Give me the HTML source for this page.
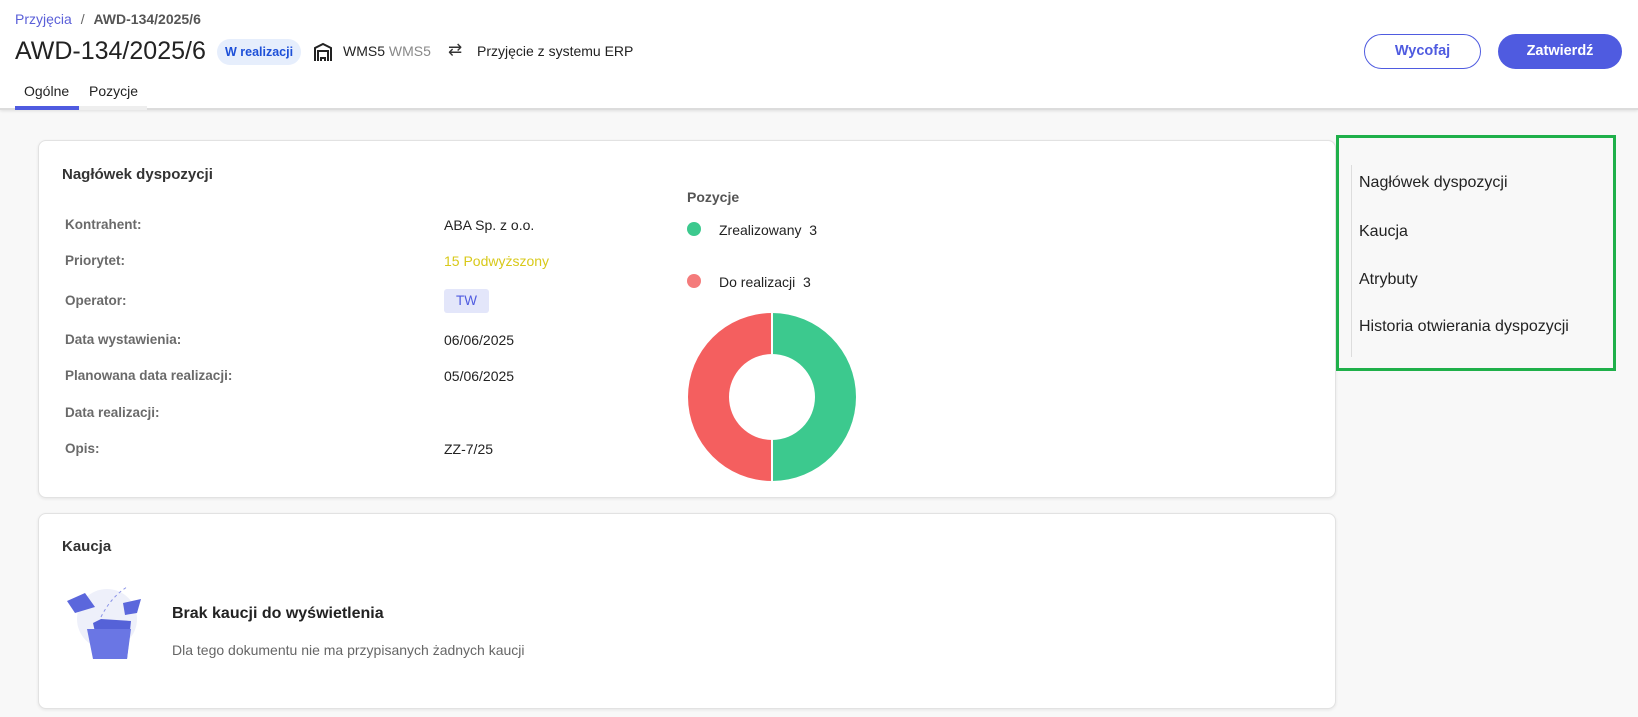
<!DOCTYPE html>
<html><head><meta charset="utf-8"><style>
*{box-sizing:border-box;margin:0;padding:0}
body{width:1638px;height:717px;overflow:hidden;background:#f8f8f8;font-family:"Liberation Sans",sans-serif;color:#222;position:relative;font-size:14.5px}
.a{position:absolute;white-space:nowrap}
.hdr{position:absolute;left:0;top:0;width:1638px;height:110px;background:#fff;border-bottom:2px solid #dcdcdc;box-shadow:0 1px 3px rgba(0,0,0,.1)}
.card{position:absolute;background:#fff;border:1px solid #e2e2e2;border-radius:8px;box-shadow:0 1px 3px rgba(0,0,0,.08)}
.lbl{color:#6a6a6a;font-size:13.5px;font-weight:bold}
.val{font-size:14px;color:#222}
.btn{position:absolute;border-radius:18px;font-weight:bold;font-size:14.5px;text-align:center;line-height:35px}
</style></head><body>
<div class="hdr"></div>
<div class="a" style="left:15px;top:11px;font-size:14px;color:#5a5fd8">Przyjęcia <span style="color:#666;margin:0 5px">/</span> <b style="color:#555">AWD-134/2025/6</b></div>
<div class="a" style="left:15px;top:37px;font-size:25px;color:#222">AWD-134/2025/6</div>
<div class="a" style="left:217px;top:39px;height:26px;padding:0 8px;line-height:26px;border-radius:13px;background:#e6eefc;color:#1e50d8;font-weight:bold;font-size:12.5px">W realizacji</div>
<svg class="a" style="left:313px;top:42px" width="20" height="20" viewBox="0 0 20 20" fill="none" stroke="#222" stroke-width="2"><path d="M2 19V6l8-4 8 4v13M5 19V9h10v10M8 19v-3h4v3"/></svg>
<div class="a" style="left:343px;top:43px;font-size:14px">WMS5 <span style="color:#888">WMS5</span></div>
<div class="a" style="left:448px;top:40px;font-size:17px;color:#333">⇄</div>
<div class="a" style="left:477px;top:43px;font-size:14px">Przyjęcie z systemu ERP</div>
<div class="a" style="left:24px;top:83px;font-size:14px">Ogólne</div>
<div class="a" style="left:89px;top:83px;font-size:14px">Pozycje</div>
<div class="a" style="left:15px;top:106px;width:64px;height:4px;background:#4f5be0"></div>
<div class="a" style="left:79px;top:106px;width:68px;height:4px;background:#eee"></div>
<div class="btn" style="left:1364px;top:34px;width:117px;height:35px;border:1.5px solid #4f5be0;color:#4f5be0;background:#fff;line-height:32px">Wycofaj</div>
<div class="btn" style="left:1498px;top:34px;width:124px;height:35px;background:#4f5be0;color:#fff">Zatwierdź</div>

<div class="card" style="left:38px;top:140px;width:1298px;height:358px"></div>
<div class="a" style="left:62px;top:166px;font-weight:bold;font-size:15px;color:#333">Nagłówek dyspozycji</div>
<div class="a lbl" style="left:65px;top:217px">Kontrahent:</div><div class="a val" style="left:444px;top:217px">ABA Sp. z o.o.</div>
<div class="a lbl" style="left:65px;top:253px">Priorytet:</div><div class="a val" style="left:444px;top:253px;color:#d8c91a">15 Podwyższony</div>
<div class="a lbl" style="left:65px;top:293px">Operator:</div><div class="a" style="left:444px;top:289px;width:45px;height:24px;background:#e3e6fa;color:#4f5be0;border-radius:3px;text-align:center;line-height:24px;font-size:13.5px">TW</div>
<div class="a lbl" style="left:65px;top:332px">Data wystawienia:</div><div class="a val" style="left:444px;top:332px">06/06/2025</div>
<div class="a lbl" style="left:65px;top:368px">Planowana data realizacji:</div><div class="a val" style="left:444px;top:368px">05/06/2025</div>
<div class="a lbl" style="left:65px;top:405px">Data realizacji:</div>
<div class="a lbl" style="left:65px;top:441px">Opis:</div><div class="a val" style="left:444px;top:441px">ZZ-7/25</div>
<div class="a" style="left:687px;top:189px;font-size:14px;color:#555;font-weight:bold">Pozycje</div>
<div class="a" style="left:687px;top:222px;width:14px;height:14px;border-radius:50%;background:#3cc98e"></div>
<div class="a val" style="left:719px;top:222px">Zrealizowany&nbsp; 3</div>
<div class="a" style="left:687px;top:274px;width:14px;height:14px;border-radius:50%;background:#f47b7b"></div>
<div class="a val" style="left:719px;top:274px">Do realizacji&nbsp; 3</div>
<svg class="a" style="left:688px;top:313px" width="168" height="168" viewBox="0 0 168 168">
<path d="M84 0A84 84 0 0 1 84 168L84 127A43 43 0 0 0 84 41Z" fill="#3cc98e"/>
<path d="M84 0A84 84 0 0 0 84 168L84 127A43 43 0 0 1 84 41Z" fill="#f45f5f"/>
<line x1="84" y1="0" x2="84" y2="41" stroke="#fff" stroke-width="2"/><line x1="84" y1="127" x2="84" y2="168" stroke="#fff" stroke-width="2"/>
</svg>

<div class="card" style="left:38px;top:513px;width:1298px;height:196px"></div>
<div class="a" style="left:62px;top:538px;font-weight:bold;font-size:15px;color:#333">Kaucja</div>
<svg class="a" style="left:63px;top:585px" width="80" height="78" viewBox="0 0 80 78">
<circle cx="44" cy="34" r="30" fill="#eef0fa"/>
<path d="M4 16l18-8 10 14-20 6z" fill="#5b67dc"/>
<path d="M60 18l18-4-4 14-12 2z" fill="#5b67dc"/>
<path d="M30 38l8-4 30 2-4 38H38z" fill="#5562d8"/>
<path d="M24 44h44l-4 30H30z" fill="#6a76e4"/>
<path d="M38 32q10-20 26-30" stroke="#8a93e8" stroke-dasharray="3 3" fill="none"/>
</svg>
<div class="a" style="left:172px;top:605px;font-weight:bold;font-size:16px;color:#222">Brak kaucji do wyświetlenia</div>
<div class="a" style="left:172px;top:642px;font-size:14px;color:#666">Dla tego dokumentu nie ma przypisanych żadnych kaucji</div>

<div class="a" style="left:1336px;top:135px;width:280px;height:236px;border:3px solid #1fb04a"></div>
<div class="a" style="left:1351px;top:165px;width:1px;height:192px;background:#ddd"></div>
<div class="a" style="left:1359px;top:174px;font-size:16px">Nagłówek dyspozycji</div>
<div class="a" style="left:1359px;top:223px;font-size:16px">Kaucja</div>
<div class="a" style="left:1359px;top:271px;font-size:16px">Atrybuty</div>
<div class="a" style="left:1359px;top:318px;font-size:16px">Historia otwierania dyspozycji</div>
</body></html>
